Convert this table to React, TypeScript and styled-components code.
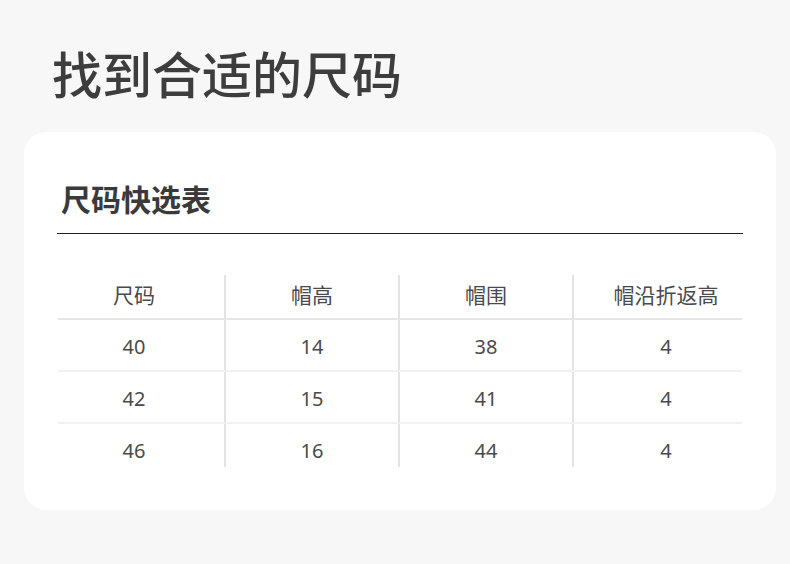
import React from 'react';
import styled, { createGlobalStyle } from 'styled-components';

const GlobalStyle = createGlobalStyle`
  html, body { margin: 0; padding: 0; background: #f7f7f7; }
  body { font-family: "Noto Sans", "Noto Sans CJK SC", sans-serif; }
`;

const columns = ['尺码', '帽高', '帽围', '帽沿折返高'];
const rows = [
  ['40', '14', '38', '4'],
  ['42', '15', '41', '4'],
  ['46', '16', '44', '4'],
];

const Page = styled.div`
  width: 790px;
  height: 564px;
  box-sizing: border-box;
  padding: 42px 14px 0 24px;
`;

const Title = styled.h1`
  margin: 0 0 30px 28px;
  font-family: "Noto Sans CJK SC", sans-serif;
  font-size: 50px;
  line-height: 60px;
  font-weight: 500;
  color: #3d3d3d;
`;

const Card = styled.div`
  background: #fff;
  border-radius: 22px;
  height: 378px;
  box-sizing: border-box;
  padding: 46px 33px 0 33px;
`;

const CardHead = styled.div`
  border-bottom: 1px solid #222;
  padding: 0 0 15px 4px;
`;

const Subtitle = styled.h2`
  margin: 0;
  font-family: "Noto Sans CJK SC", sans-serif;
  font-size: 30px;
  line-height: 40px;
  font-weight: 700;
  color: #3a3a3a;
`;

const Table = styled.div`
  margin: 41px 1px 0 1px;
`;

const Row = styled.div<{ $head?: boolean; $last?: boolean }>`
  display: grid;
  grid-template-columns: 166px 174px 174px 170px;
  height: ${p => (p.$head ? 45 : p.$last ? 43 : 52)}px;
  box-sizing: border-box;
  border-bottom: ${p => (p.$last ? 'none' : p.$head ? '2px solid #e6e6e6' : '2px solid #f1f1f1')};
`;

const Cell = styled.div<{ $head?: boolean; $col: number }>`
  box-sizing: border-box;
  border-left: ${p => (p.$col > 0 ? '2px solid #e3e3e3' : 'none')};
  text-align: center;
  font-family: "Noto Sans", "Noto Sans CJK SC", sans-serif;
  font-size: ${p => (p.$head ? 21 : 20)}px;
  color: #4a4a4a;
  line-height: ${p => (p.$head ? '40px' : '26px')};
  padding-top: ${p => (p.$head ? 0 : 14)}px;
  padding-right: ${p => (p.$col === 0 ? 14 : 0)}px;
  padding-left: ${p => (p.$col === 3 ? 16 : 0)}px;
`;

export default function App() {
  return (
    <>
      <GlobalStyle />
      <Page>
        <Title>找到合适的尺码</Title>
        <Card>
          <CardHead>
            <Subtitle>尺码快选表</Subtitle>
          </CardHead>
          <Table>
            <Row $head>
              {columns.map((c, i) => (
                <Cell key={c} $head $col={i}>{c}</Cell>
              ))}
            </Row>
            {rows.map((r, ri) => (
              <Row key={ri} $last={ri === rows.length - 1}>
                {r.map((v, i) => (
                  <Cell key={i} $col={i}>{v}</Cell>
                ))}
              </Row>
            ))}
          </Table>
        </Card>
      </Page>
    </>
  );
}
